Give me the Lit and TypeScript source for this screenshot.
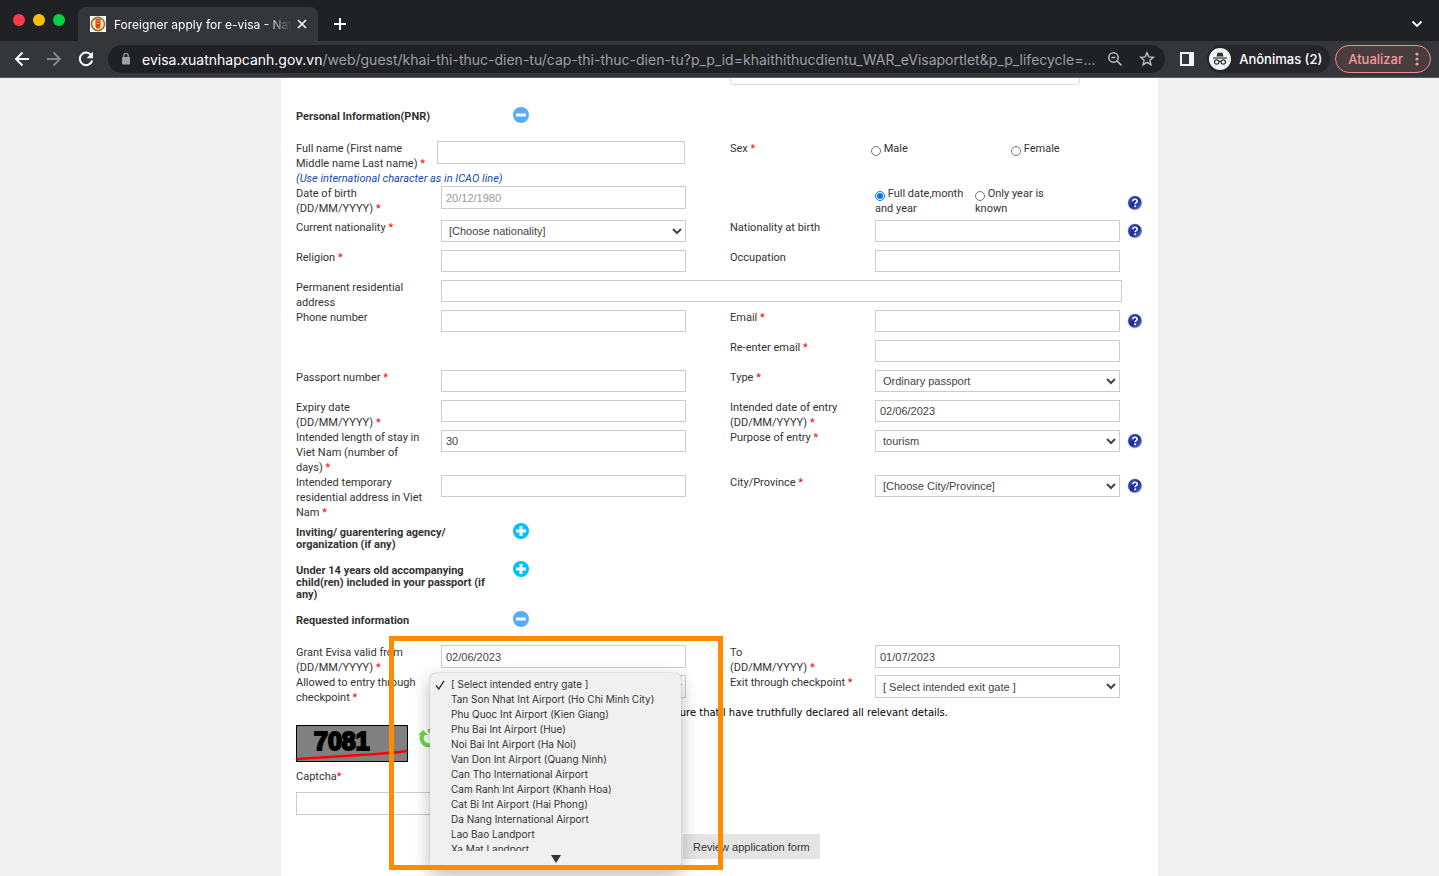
import { LitElement, html, css, svg, nothing } from "lit";
import { customElement, property } from "lit/decorators.js";

const GATES = [
  "[ Select intended entry gate ]",
  "Tan Son Nhat Int Airport (Ho Chi Minh City)",
  "Phu Quoc Int Airport (Kien Giang)",
  "Phu Bai Int Airport (Hue)",
  "Noi Bai Int Airport (Ha Noi)",
  "Van Don Int Airport (Quang Ninh)",
  "Can Tho International Airport",
  "Cam Ranh Int Airport (Khanh Hoa)",
  "Cat Bi Int Airport (Hai Phong)",
  "Da Nang International Airport",
  "Lao Bao Landport",
  "Xa Mat Landport",
];

/* Browser window frame: tab strip and toolbar. */
@customElement("browser-bar")
export class BrowserBar extends LitElement {
  static styles = css`
    :host {
      display: block;
      color: #fff;
      font-family: Inter, "Liberation Sans", sans-serif;
      background: #202124;
    }
    button {
      display: grid;
      place-items: center;
      border: 0;
      padding: 0;
      background: none;
      color: inherit;
      font: inherit;
    }
    svg {
      display: block;
    }
    .strip {
      display: flex;
      height: 41px;
      align-items: flex-end;
    }
    .lights {
      display: flex;
      gap: 8px;
      padding: 0 13px 15px;
    }
    .light {
      width: 12px;
      height: 12px;
      border-radius: 50%;
    }
    .red {
      background: #ff3b48;
    }
    .amber {
      background: #ffbd05;
    }
    .green {
      background: #05d143;
    }
    .tab {
      display: flex;
      align-items: center;
      box-sizing: border-box;
      width: 240px;
      height: 34px;
      padding: 0 10px 0 12px;
      border-radius: 8px 8px 0 0;
      background: #35363a;
      font-size: 12px;
    }
    .title {
      flex: 1;
      margin: 0 4px 0 8px;
      overflow: hidden;
      white-space: nowrap;
      mask-image: linear-gradient(90deg, #000 85%, transparent);
    }
    .plus {
      width: 24px;
      height: 34px;
      margin-left: 10px;
    }
    .more {
      width: 24px;
      height: 34px;
      margin: 0 10px 0 auto;
    }
    .toolbar {
      display: flex;
      align-items: center;
      height: 36px;
      padding: 0 8px 0 10px;
      background: #35363a;
      border-bottom: 1px solid #5b5c5f;
    }
    .nav {
      width: 24px;
      height: 28px;
      margin-right: 8px;
    }
    .dim {
      color: #85868a;
    }
    .address {
      display: flex;
      align-items: center;
      flex: 1;
      min-width: 0;
      height: 28px;
      margin-left: 2px;
      padding: 0 6px 0 12px;
      border-radius: 14px;
      background: #202124;
      font-size: 14px;
      color: #9aa0a6;
    }
    .url {
      flex: 1;
      min-width: 0;
      margin: 0 0 0 10px;
      overflow: hidden;
      white-space: nowrap;
    }
    .host {
      color: #fff;
    }
    .tool {
      width: 24px;
      height: 24px;
      margin-left: 8px;
    }
    .panel {
      width: 24px;
      height: 28px;
      margin: 0 8px 0 10px;
    }
    .profile {
      display: flex;
      align-items: center;
      gap: 8px;
      height: 28px;
      padding: 0 8px 0 2px;
      border-radius: 14px;
      background: #26262a;
      font-size: 13px;
      font-weight: 500;
    }
    .update {
      display: flex;
      align-items: center;
      gap: 12px;
      height: 28px;
      margin-left: 5px;
      padding: 0 11px 0 12px;
      border: 1px solid #f28b8b;
      border-radius: 14px;
      background: #4a3d40;
      color: #f79a9a;
      font-size: 13px;
      font-weight: 500;
    }
  `;

  render() {
    return html`
      <div class="strip">
        <div class="lights">
          <span class="light red"></span><span class="light amber"></span><span class="light green"></span>
        </div>
        <div class="tab">
          <svg width="16" height="16" viewBox="0 0 16 16">
            <rect width="16" height="16" fill="#fff" />
            <circle cx="8" cy="8" r="6.6" fill="#f4e9b0" stroke="#8b7a3c" stroke-width="1.6" />
            <path d="M5.5 3h5v7l-1 2.500h-3l-1-2.500z" fill="#d8432a" />
            <path d="M6.500 5h3M6.500 7.500h3M6 12.500h4" stroke="#e9b22c" />
          </svg>
          <span class="title">Foreigner apply for e-visa - National</span>
          <button aria-label="Close tab">
            <svg width="12" height="12" viewBox="0 0 12 12" stroke="#fff" stroke-width="1.6">
              <path d="M2 2l8 8M10 2l-8 8" />
            </svg>
          </button>
        </div>
        <button class="plus" aria-label="New tab">
          <svg width="14" height="14" viewBox="0 0 14 14" stroke="#fff" stroke-width="2"><path d="M7 1v12M1 7h12" /></svg>
        </button>
        <button class="more" aria-label="Search tabs">
          <svg width="12" height="12" viewBox="0 0 12 12" fill="none" stroke="#fff" stroke-width="1.800">
            <path d="M1.500 3.500L6 8l4.500-4.500" />
          </svg>
        </button>
      </div>
      <div class="toolbar">
        <button class="nav" aria-label="Back">
          <svg width="16" height="16" viewBox="0 0 16 16" fill="none" stroke="currentColor" stroke-width="1.900">
            <path d="M15 8H2.500M8.500 1.500L2 8l6.500 6.500" />
          </svg>
        </button>
        <button class="nav dim" aria-label="Forward">
          <svg width="16" height="16" viewBox="0 0 16 16" fill="none" stroke="currentColor" stroke-width="1.900">
            <path d="M1 8h12.500M7.500 1.500L14 8l-6.500 6.500" />
          </svg>
        </button>
        <button class="nav" aria-label="Reload">
          <svg width="16" height="16" viewBox="0 0 16 16">
            <path d="M13.300 4.200A6.300 6.300 0 1 0 14.200 9.500" fill="none" stroke="currentColor" stroke-width="2" />
            <path d="M15 .8v6.400H8.600z" fill="currentColor" />
          </svg>
        </button>
        <div class="address">
          <svg width="12" height="14" viewBox="0 0 12 14">
            <rect x="2" y="5" width="8" height="7.500" rx="1" fill="#9aa0a6" />
            <path d="M3.800 5V3.500a2.200 2.200 0 0 1 4.400 0V5" fill="none" stroke="#9aa0a6" stroke-width="1.300" />
          </svg>
          <div class="url" role="textbox" aria-label="Address"><span class="host">evisa.xuatnhapcanh.gov.vn</span>/web/guest/khai-thi-thuc-dien-tu/cap-thi-thuc-dien-tu?p_p_id=khaithithucdientu_WAR_eVisaportlet&amp;p_p_lifecycle=...</div>
          <button class="tool" aria-label="Zoom">
            <svg width="16" height="16" viewBox="0 0 16 16" fill="none" stroke="#bdc1c6" stroke-width="1.500">
              <circle cx="6.500" cy="6.500" r="4.700" /><path d="M4.500 6.500h4M10 10l4.500 4.500" />
            </svg>
          </button>
          <button class="tool" aria-label="Bookmark">
            <svg width="16" height="16" viewBox="0 0 16 16" fill="none" stroke="#bdc1c6" stroke-width="1.400">
              <path d="M8 1.800l1.800 4.100 4.500.4-3.400 3 1 4.400L8 11.400l-3.900 2.300 1-4.400-3.400-3 4.500-.4z" />
            </svg>
          </button>
        </div>
        <button class="panel" aria-label="Side panel">
          <svg width="14" height="14" viewBox="0 0 14 14"><path d="M0 0h14v14H0zM2 2v10h7V2z" fill="#f1f3f4" fill-rule="evenodd" /></svg>
        </button>
        <button class="profile">
          <svg width="22" height="22" viewBox="0 0 22 22">
            <circle cx="11" cy="11" r="11" fill="#f1f3f4" />
            <path d="M7.500 8.500L8.600 4.800q.2-.6.8-.4l1.600.5 1.600-.5q.6-.2.8.4l1.100 3.700z" fill="#303134" />
            <path d="M4 10h14" stroke="#303134" stroke-width="1.200" />
            <g fill="none" stroke="#303134" stroke-width="1.200">
              <circle cx="7.700" cy="14" r="2.200" /><circle cx="14.300" cy="14" r="2.200" /><path d="M9.900 13.700q1.100-.7 2.200 0" />
            </g>
          </svg>
          Anônimas (2)
        </button>
        <button class="update">
          Atualizar
          <svg width="4" height="16" viewBox="0 0 4 16" fill="currentColor">
            <circle cx="2" cy="3" r="1.600" /><circle cx="2" cy="8" r="1.600" /><circle cx="2" cy="13" r="1.600" />
          </svg>
        </button>
      </div>
    `;
  }
}

/* E-visa application form. */
@customElement("visa-form")
export class VisaForm extends LitElement {
  static styles = css`
    :host {
      display: block;
      box-sizing: border-box;
      width: 100%;
      max-width: 877px;
      min-height: calc(100vh - 78px);
      margin: 0 auto;
      padding: 0 15px;
      background: #fff;
      color: #333;
      font: 11px/15px Roboto, "Liberation Sans", sans-serif;
    }
    input,
    select,
    button {
      font: 11px "Liberation Sans", Arial, sans-serif;
      color: #444;
    }
    .box {
      display: block;
      box-sizing: border-box;
      width: 100%;
      height: 22px;
      margin: 0;
      padding: 0 4px;
      border: 1px solid #ccc;
      border-radius: 0;
      background: #fff;
    }
    .box::placeholder {
      color: #999;
    }
    .tall {
      height: 23px;
    }
    select.box {
      padding: 0 3px;
    }
    .previous {
      display: grid;
      grid-template-columns: 434px 350px;
    }
    .end {
      grid-column: 2;
      height: 6px;
      border: 1px solid #ddd;
      border-top: 0;
      border-radius: 0 0 4px 4px;
    }
    .previous + .head {
      padding-top: 26px;
    }
    .head {
      display: grid;
      grid-template-columns: 193px 16px;
      column-gap: 24px;
      padding: 7px 0 7px;
    }
    h2 {
      margin: 0;
      font-size: 11px;
      line-height: 12px;
      font-weight: 700;
    }
    .toggle {
      width: 16px;
      height: 12px;
      padding: 0;
      border: 0;
      background: none;
    }
    .toggle svg,
    .help svg {
      display: block;
    }
    .toggle svg {
      margin-top: -4px;
    }
    .fields {
      padding-top: 11px;
    }
    .row {
      display: grid;
      grid-template-columns: 145px 1fr 44px 145px 1fr 23px;
      min-height: 30px;
    }
    .row.dates {
      min-height: 34px;
    }
    .label {
      grid-column: 1;
      padding-right: 14px;
    }
    .label.second {
      grid-column: 4;
    }
    .cell {
      grid-column: 2;
      position: relative;
    }
    .cell.second {
      grid-column: 5;
    }
    .cell.wide {
      grid-column: 2 / 6;
      margin-right: -2px;
    }
    .cell.name {
      margin: 0 1px 0 -4px;
    }
    .star {
      color: #f00;
    }
    .note {
      display: block;
      color: #1549b4;
      font-style: italic;
    }
    .radios {
      display: grid;
      grid-template-columns: 100px 100px;
    }
    .radios.sex {
      grid-template-columns: 140px 100px;
      margin-left: -4px;
    }
    .radios label {
      padding-right: 10px;
    }
    .radios input {
      width: 10px;
      height: 10px;
      margin: 0;
      vertical-align: -4px;
    }
    .help {
      grid-column: 6;
      display: block;
      width: 16px;
      height: 16px;
      margin: 3px 0 0 7px;
      padding: 0;
      border: 0;
      background: none;
    }
    .dates .help {
      margin-top: 9px;
    }
    .request {
      position: relative;
    }
    .menu {
      position: absolute;
      z-index: 1;
      left: -11px;
      top: -2px;
      box-sizing: border-box;
      width: 251px;
      margin: 0;
      padding: 4px 0 0;
      border-radius: 6px;
      background: #f0f0f0;
      box-shadow: 0 0 1px #888, 0 6px 18px rgba(0, 0, 0, 0.28);
      font: 10px/15px Inter, "Liberation Sans", sans-serif;
    }
    .list {
      height: 174px;
      margin: 0;
      padding: 0;
      overflow: hidden;
      list-style: none;
    }
    .option {
      display: grid;
      grid-template-columns: 10px 1fr;
      column-gap: 6px;
      padding-left: 5px;
      align-items: center;
      white-space: nowrap;
    }
    .down {
      display: block;
      margin: 4px auto 6px;
    }
    .mark {
      position: absolute;
      z-index: 2;
      left: 93px;
      top: 2px;
      box-sizing: border-box;
      width: 334px;
      height: 234px;
      border: 5px solid #ff8c00;
      pointer-events: none;
    }
    .agree {
      display: flex;
      gap: 4px;
      align-items: center;
      padding-left: 345px;
      color: #000;
      font: 10px/15px "DejaVu Sans", sans-serif;
    }
    .agree input {
      width: 12px;
      height: 12px;
      margin: 0;
    }
    .captcha {
      display: flex;
      gap: 10px;
      padding: 5px 0 7px;
    }
    .digits {
      font: 700 25px "Liberation Sans", sans-serif;
    }
    .refresh {
      width: 22px;
      height: 28px;
      padding: 0;
      border: 0;
      background: none;
    }
    .code {
      width: 245px;
      margin-top: 8px;
    }
    .actions {
      padding: 19px 0 0 387px;
    }
    .review {
      height: 25px;
      padding: 0 10px;
      border: 0;
      background: #e4e4e4;
      color: #333;
    }
  `;

  @property() date = "02/06/2023";

  star() {
    return html` <span class="star">*</span>`;
  }

  label(id: string, text: unknown, required = false, second = false) {
    return html`<label class="label ${second ? "second" : ""}" for=${id}>${text}${required ? this.star() : nothing}</label>`;
  }

  input(id: string, value = "", cls = "", tall = false, placeholder = "") {
    return html`<div class="cell ${cls}">
      <input id=${id} class="box ${tall ? "tall" : ""}" .value=${value} placeholder=${placeholder} />
    </div>`;
  }

  select(id: string, text: string, cls = "", tall = false) {
    return html`<div class="cell ${cls}">
      <select id=${id} class="box ${tall ? "tall" : ""}"><option>${text}</option></select>
    </div>`;
  }

  help() {
    return html`<button class="help" aria-label="Help">
      <svg width="16" height="16" viewBox="0 0 16 16">
        <defs>
          <linearGradient id="orb" x1="0" y1="0" x2="1" y2="1">
            <stop offset="0" stop-color="#4a63c4" /><stop offset=".5" stop-color="#1b2a94" /><stop offset="1" stop-color="#5b6ee0" />
          </linearGradient>
        </defs>
        <circle cx="8" cy="8" r="7.500" fill="#c5c8d2" />
        <circle cx="7.800" cy="7.800" r="6.700" fill="url(#orb)" />
        <path d="M5.800 6.300q0-2.100 2.200-2.100t2.200 1.900q0 1.100-1.200 1.700-.9.500-.9 1.400" fill="none" stroke="#fff" stroke-width="1.600" />
        <circle cx="8.100" cy="11.300" r="1" fill="#fff" />
      </svg>
    </button>`;
  }

  head(text: string, open: boolean) {
    return html`<div class="head">
      <h2>${text}</h2>
      <button class="toggle" aria-label="Toggle ${text}">
        <svg width="16" height="16" viewBox="0 0 16 16">
          <circle cx="8" cy="8" r="8" fill=${open ? "#55acfa" : "#00bfff"} />
          ${open
            ? svg`<path d="M3 8h10" stroke="#fff" stroke-width="3" />`
            : svg`<path d="M3 8h10M8 3v10" stroke="#fff" stroke-width="3" />`}
        </svg>
      </button>
    </div>`;
  }

  render() {
    return html`
      <div class="previous"><div class="end"></div></div>
      ${this.head("Personal Information(PNR)", true)}
      <div class="fields">
        <div class="row">
          ${this.label("name", "Full name (First name Middle name Last name)", true)} ${this.input("name", "", "name", true)}
          <span class="label second">Sex${this.star()}</span>
          <div class="cell second radios sex">
            <label><input type="radio" name="sex" /> Male</label>
            <label><input type="radio" name="sex" /> Female</label>
          </div>
        </div>
        <span class="note">(Use international character as in ICAO line)</span>
        <div class="row dates">
          ${this.label("birth", "Date of birth (DD/MM/YYYY)", true)} ${this.input("birth", "", "", true, "20/12/1980")}
          <div class="cell second radios">
            <label><input type="radio" name="kind" checked /> Full date,month and year</label>
            <label><input type="radio" name="kind" /> Only year is known</label>
          </div>
          ${this.help()}
        </div>
        <div class="row">
          ${this.label("nation", "Current nationality", true)} ${this.select("nation", "[Choose nationality]")}
          ${this.label("native", "Nationality at birth", false, true)} ${this.input("native", "", "second")} ${this.help()}
        </div>
        <div class="row">
          ${this.label("religion", "Religion", true)} ${this.input("religion")}
          ${this.label("job", "Occupation", false, true)} ${this.input("job", "", "second")}
        </div>
        <div class="row">
          ${this.label("address", "Permanent residential address")} ${this.input("address", "", "wide")}
        </div>
        <div class="row">
          ${this.label("phone", "Phone number")} ${this.input("phone")}
          ${this.label("email", "Email", true, true)} ${this.input("email", "", "second")} ${this.help()}
        </div>
        <div class="row">${this.label("email2", "Re-enter email", true, true)} ${this.input("email2", "", "second")}</div>
        <div class="row">
          ${this.label("passport", "Passport number", true)} ${this.input("passport")}
          ${this.label("type", "Type", true, true)} ${this.select("type", "Ordinary passport", "second")}
        </div>
        <div class="row">
          ${this.label("expiry", "Expiry date (DD/MM/YYYY)", true)} ${this.input("expiry")}
          ${this.label("entry", "Intended date of entry (DD/MM/YYYY)", true, true)} ${this.input("entry", this.date, "second")}
        </div>
        <div class="row">
          ${this.label("stay", "Intended length of stay in Viet Nam (number of days)", true)} ${this.input("stay", "30")}
          ${this.label("purpose", "Purpose of entry", true, true)} ${this.select("purpose", "tourism", "second")} ${this.help()}
        </div>
        <div class="row">
          ${this.label("temp", "Intended temporary residential address in Viet Nam", true)} ${this.input("temp")}
          ${this.label("city", "City/Province", true, true)} ${this.select("city", "[Choose City/Province]", "second")} ${this.help()}
        </div>
      </div>
      ${this.head("Inviting/ guarentering agency/ organization (if any)", false)}
      ${this.head("Under 14 years old accompanying child(ren) included in your passport (if any)", false)}
      ${this.head("Requested information", true)}
      <div class="fields request">
        <div class="row">
          ${this.label("from", "Grant Evisa valid from (DD/MM/YYYY)", true)} ${this.input("from", this.date, "", true)}
          ${this.label("to", html`To<br />(DD/MM/YYYY)`, true, true)} ${this.input("to", "01/07/2023", "second", true)}
        </div>
        <div class="row">
          ${this.label("gate", "Allowed to entry through checkpoint", true)}
          <div class="cell">
            <select id="gate" class="box tall">${GATES.map((g) => html`<option>${g}</option>`)}</select>
            <div class="menu">
              <ul class="list" role="listbox" aria-label="Entry gate">
                ${GATES.map(
                  (g, i) => html`<li class="option" role="option" aria-selected=${i === 0}>
                    <svg width="10" height="10" viewBox="0 0 10 10" fill="none" stroke="#333" stroke-width="1.400">
                      ${i === 0 ? svg`<path d="M1 5.500L3.800 9 9 .8" />` : nothing}
                    </svg>
                    <span>${g}</span>
                  </li>`
                )}
              </ul>
              <svg class="down" width="10" height="8" viewBox="0 0 10 8"><path d="M0 0h10L5 8z" fill="#333" /></svg>
            </div>
          </div>
          ${this.label("exit", "Exit through checkpoint", true, true)}
          ${this.select("exit", "[ Select intended exit gate ]", "second", true)}
        </div>
        <label class="agree"><input type="checkbox" />I assure that I have truthfully declared all relevant details.</label>
        <div class="captcha">
          <svg width="112" height="37" viewBox="0 0 112 37" role="img" aria-label="Captcha picture">
            <rect x=".5" y=".5" width="111" height="36" fill="#808080" stroke="#000" />
            <text class="digits" x="18" y="25" stroke="#000" stroke-width="2">7081</text>
            <path d="M1 34L80 29l24-2 7-1" fill="none" stroke="#f00" stroke-width="2.500" />
          </svg>
          <button class="refresh" aria-label="New captcha">
            <svg width="22" height="22" viewBox="0 0 22 22" fill="none" stroke="#6cd646" stroke-width="4">
              <path d="M5 7a7 7 0 0 0 7 11M17 15A7 7 0 0 0 10 4" /><path d="M0 8l5-5 5 5z" fill="#6cd646" stroke="none" />
            </svg>
          </button>
        </div>
        <label for="code">Captcha<span class="star">*</span></label>
        <input id="code" class="box tall code" />
        <div class="actions"><button class="review">Review application form</button></div>
        <div class="mark"></div>
      </div>
    `;
  }
}

@customElement("app-root")
export class AppRoot extends LitElement {
  static styles = css`
    :host {
      display: block;
      min-height: 100vh;
      background: #f0f0f0;
    }
  `;

  render() {
    return html`<browser-bar></browser-bar><visa-form></visa-form>`;
  }
}
